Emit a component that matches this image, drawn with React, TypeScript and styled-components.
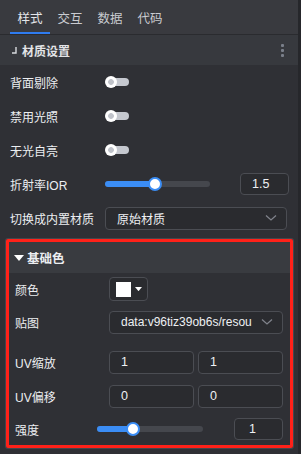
import React from "react";
import styled, { createGlobalStyle } from "styled-components";

const Global = createGlobalStyle`
  html, body { margin: 0; padding: 0; background: #26272b; }
  body { font-family: "Liberation Sans", "Noto Sans CJK SC", sans-serif; }
  * { box-sizing: border-box; }
`;

const Panel = styled.div`
  width: 298px;
  height: 454px;
  background: #2f3035;
  color: #e6e6e6;
  font-size: 12px;
  overflow: hidden;
`;

const TabBar = styled.div`
  display: flex;
  height: 35px;
  padding-left: 10px;
  background: #393a3f;
  border-bottom: 1px solid #2a2b2f;
`;

const Tab = styled.div<{ $active?: boolean }>`
  width: 40px;
  height: 34px;
  display: flex;
  align-items: center;
  justify-content: center;
  font-size: 12.5px;
  color: ${(p) => (p.$active ? "#e4e6ea" : "#c9cbd0")};
  border-bottom: 2px solid ${(p) => (p.$active ? "#2f7cf0" : "transparent")};
  padding-top: 2px;
`;

const Header = styled.div`
  display: flex;
  align-items: center;
  height: 30px;
  padding: 0 12px;
  background: #37393e;
  font-weight: 700;
  color: #e3e4e7;
`;

const HeaderTitle = styled.span`
  flex: 1;
  margin-left: 5px;
`;

const Dots = styled.div`
  display: flex;
  flex-direction: column;
  gap: 2px;
  margin-right: 2px;
  span {
    width: 3px;
    height: 3px;
    background: #7a7f8a;
    border-radius: 1px;
  }
`;

const Row = styled.div<{ $h?: number; $pl?: number; $pr?: number; $mt?: number }>`
  display: flex;
  align-items: center;
  height: ${(p) => p.$h ?? 34}px;
  padding-left: ${(p) => p.$pl ?? 10}px;
  padding-right: ${(p) => p.$pr ?? 9}px;
  margin-top: ${(p) => p.$mt ?? 0}px;
`;

const Label = styled.div<{ $w?: number }>`
  width: ${(p) => p.$w ?? 95}px;
  flex-shrink: 0;
  color: #eceef1;
  white-space: nowrap;
`;

const Toggle = styled.div`
  position: relative;
  width: 24px;
  height: 12px;
  &::before {
    content: "";
    position: absolute;
    left: 3px;
    right: 0;
    top: 2px;
    height: 8px;
    border-radius: 4px;
    background: #c5c8cf;
  }
  &::after {
    content: "";
    position: absolute;
    left: 0;
    top: 0;
    width: 12px;
    height: 12px;
    border-radius: 50%;
    background: radial-gradient(circle, #c0c3ca 0 2.5px, #ffffff 3.2px);
  }
`;

const SliderWrap = styled.div<{ $w: number }>`
  position: relative;
  width: ${(p) => p.$w}px;
  height: 14px;
  flex-shrink: 0;
`;

const Track = styled.div`
  position: absolute;
  left: 0;
  right: 0;
  top: 4px;
  height: 6px;
  border-radius: 3px;
  background: #45474d;
`;

const Fill = styled.div`
  position: absolute;
  left: 0;
  top: 4px;
  height: 6px;
  border-radius: 3px;
  background: #3b8df5;
`;

const Knob = styled.div`
  position: absolute;
  top: 0;
  width: 14px;
  height: 14px;
  margin-left: -7px;
  border-radius: 50%;
  background: #ffffff;
  border: 2px solid #3b8df5;
`;

const Slider = ({ w, pct }: { w: number; pct: number }) => (
  <SliderWrap $w={w}>
    <Track />
    <Fill style={{ width: `${pct}%` }} />
    <Knob style={{ left: `${pct}%` }} />
  </SliderWrap>
);

const Box = styled.div<{ $w?: number; $h?: number }>`
  display: flex;
  align-items: center;
  height: ${(p) => p.$h ?? 23}px;
  ${(p) => (p.$w ? `width: ${p.$w}px;` : "flex: 1;")}
  min-width: 0;
  border: 1px solid #4b4d53;
  border-radius: 4px;
  background: #2a2b2f;
  color: #eef0f3;
  font-size: 12.5px;
  padding: 0 9px 0 11px;
  overflow: hidden;
  white-space: nowrap;
`;

const Spacer = styled.div`
  flex: 1;
`;

const SelectText = styled.span`
  flex: 1;
  white-space: nowrap;
  font-size: 12px;
`;

const Chevron = () => (
  <svg width="12" height="8" viewBox="0 0 12 8" style={{ flexShrink: 0, marginLeft: 2 }}>
    <path d="M1 1.5 L6 6 L11 1.5" fill="none" stroke="#7f828a" strokeWidth="1.3" />
  </svg>
);

const Pair = styled.div`
  flex: 1;
  display: flex;
  gap: 4px;
`;

const Card = styled.div`
  margin: 4px 5px 0 6px;
  border: 3px solid #ff2119;
  border-radius: 2px;
  box-shadow: 0 0 0 1px #44464c;
`;

const CardHeader = styled.div`
  display: flex;
  align-items: center;
  height: 31px;
  padding-left: 5px;
  background: #393b40;
  font-weight: 700;
  font-size: 12.5px;
  color: #eceef1;
  gap: 3px;
`;

const ColorBox = styled.div`
  display: flex;
  align-items: center;
  gap: 4px;
  width: 39px;
  height: 24px;
  padding-left: 6px;
  border: 1px solid #4b4d53;
  border-radius: 4px;
  background: #2a2b2f;
`;

const Swatch = styled.div`
  width: 15px;
  height: 15px;
  background: #ffffff;
`;

const Caret = ({ size = 8 }: { size?: number }) => (
  <svg width={size} height={size * 0.6} viewBox="0 0 10 6">
    <path d="M0 0 H10 L5 6 Z" fill="#ffffff" />
  </svg>
);

export default function App() {
  return (
    <>
      <Global />
      <Panel>
        <TabBar>
          <Tab $active>样式</Tab>
          <Tab>交互</Tab>
          <Tab>数据</Tab>
          <Tab>代码</Tab>
        </TabBar>
        <Header>
          <svg width="5" height="7" viewBox="0 0 5 7">
            <path d="M4 0 V6 H0" fill="none" stroke="#d8dade" strokeWidth="1.4" />
          </svg>
          <HeaderTitle>材质设置</HeaderTitle>
          <Dots>
            <span />
            <span />
            <span />
          </Dots>
        </Header>
        <Row>
          <Label>背面剔除</Label>
          <Toggle />
        </Row>
        <Row>
          <Label>禁用光照</Label>
          <Toggle />
        </Row>
        <Row>
          <Label>无光自亮</Label>
          <Toggle />
        </Row>
        <Row>
          <Label>折射率IOR</Label>
          <Slider w={105} pct={48} />
          <Spacer />
          <Box $w={49} $h={22}>1.5</Box>
        </Row>
        <Row $pr={11}>
          <Label>切换成内置材质</Label>
          <Box>
            <SelectText>原始材质</SelectText>
            <Chevron />
          </Box>
        </Row>
        <Card>
          <CardHeader>
            <Caret size={10} />
            基础色
          </CardHeader>
          <Row $h={32} $pl={6} $pr={7}>
            <Label $w={94}>颜色</Label>
            <ColorBox>
              <Swatch />
              <Caret size={7} />
            </ColorBox>
          </Row>
          <Row $pl={6} $pr={7}>
            <Label $w={94}>贴图</Label>
            <Box>
              <SelectText>data:v96tiz39ob6s/resou</SelectText>
              <Chevron />
            </Box>
          </Row>
          <Row $pl={6} $pr={7} $mt={6}>
            <Label $w={94}>UV缩放</Label>
            <Pair>
              <Box>1</Box>
              <Box>1</Box>
            </Pair>
          </Row>
          <Row $pl={6} $pr={7}>
            <Label $w={94}>UV偏移</Label>
            <Pair>
              <Box>0</Box>
              <Box>0</Box>
            </Pair>
          </Row>
          <Row $h={32} $pl={6} $pr={7}>
            <Label $w={82}>强度</Label>
            <Slider w={106} pct={34} />
            <Spacer />
            <Box $w={49} $h={22}>
              <span style={{ paddingLeft: 3 }}>1</span>
            </Box>
          </Row>
        </Card>
      </Panel>
    </>
  );
}
